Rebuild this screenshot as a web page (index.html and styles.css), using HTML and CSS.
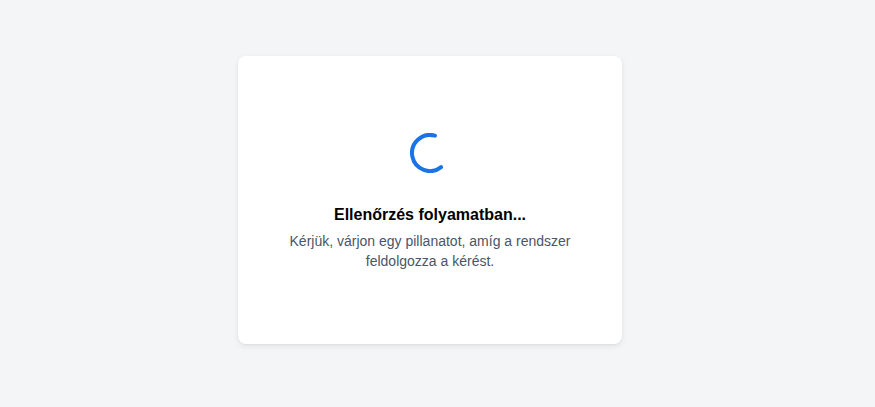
FILE: index.html
```html
<!DOCTYPE html>
<html lang="hu">
<head>
<meta charset="utf-8">
<title>Ellenőrzés folyamatban</title>
<link rel="stylesheet" href="styles.css">
</head>
<body>
<main class="page">
  <section class="card">
    <svg class="spinner" width="40" height="40" viewBox="0 0 40 40" aria-hidden="true">
      <path d="M24.96 2.70 A18 18 0 1 0 31.08 34.18" fill="none" stroke="#1a73e8" stroke-width="4" stroke-linecap="round"/>
    </svg>
    <h1 class="title">Ellenőrzés folyamatban...</h1>
    <p class="text">Kérjük, várjon egy pillanatot, amíg a rendszer feldolgozza a kérést.</p>
  </section>
</main>
</body>
</html>
```

FILE: styles.css
```css
html, body {
  margin: 0;
  padding: 0;
  background: #f4f5f7;
  font-family: "Liberation Sans", Arial, Helvetica, sans-serif;
}

.page {
  width: 860px;
  height: 400px;
  display: flex;
  align-items: center;
  justify-content: center;
}

.card {
  box-sizing: border-box;
  width: 384px;
  height: 288px;
  background: #ffffff;
  border-radius: 8px;
  box-shadow: 0 2px 6px rgba(0, 0, 0, 0.08), 0 1px 2px rgba(0, 0, 0, 0.04);
  padding: 77px 32px 0;
  display: flex;
  flex-direction: column;
  align-items: center;
  justify-content: flex-start;
  text-align: center;
}

.spinner {
  display: block;
  margin-bottom: 30px;
}

.title {
  margin: 0 0 4px;
  font-size: 16px;
  line-height: 24px;
  font-weight: 700;
  color: #000000;
}

.text {
  margin: 0;
  font-size: 14px;
  line-height: 20px;
  color: #4a5568;
}
```
